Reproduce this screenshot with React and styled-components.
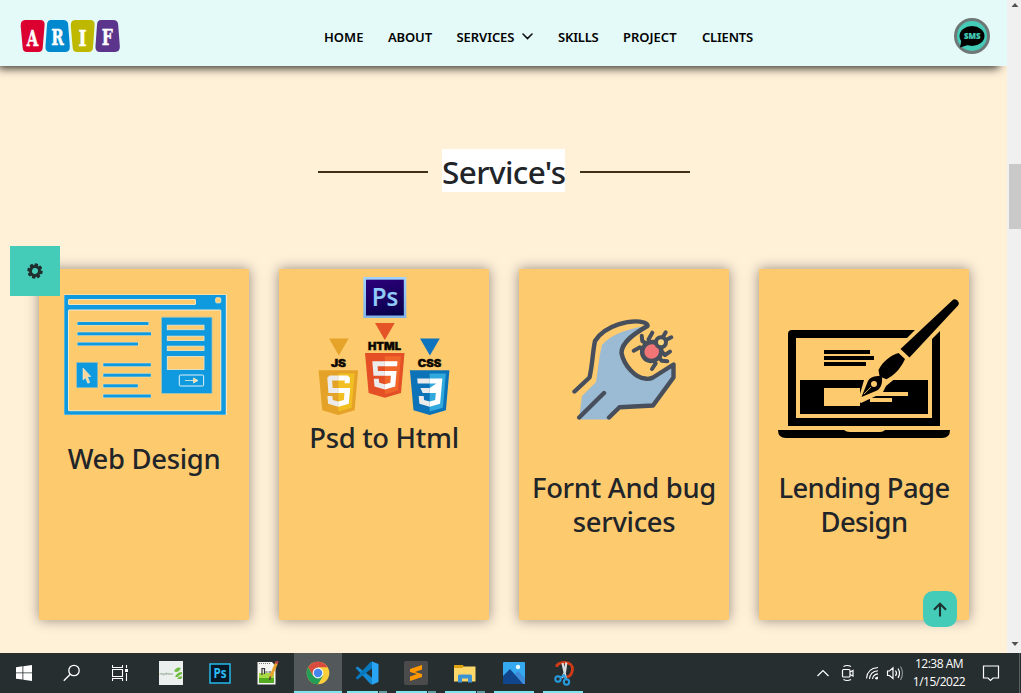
import React from "react";
import styled, { createGlobalStyle } from "styled-components";

const GlobalStyle = createGlobalStyle`
  * { box-sizing: border-box; }
  html, body { margin: 0; padding: 0; overflow: hidden; }
  body { font-family: "Noto Sans", "Open Sans", sans-serif; color: #212529; }
  svg { display: block; flex: none; }
`;

const Screen = styled.div`
  width: 1021px;
  height: 693px;
  display: flex;
  flex-direction: column;
  overflow: hidden;
`;

const Browser = styled.div`
  display: flex;
  height: 653px;
`;

const Page = styled.div`
  position: relative;
  width: 1007px;
  height: 653px;
  background: #fff0d8;
  overflow: hidden;
`;

const Header = styled.header`
  display: flex;
  align-items: center;
  height: 66px;
  padding: 0 17px 0 20px;
  background: #e3faf8;
  position: relative;
  box-shadow: -5px 5px 9px -3px rgba(0, 0, 0, 0.85);
`;

const Nav = styled.nav`
  display: flex;
  align-items: center;
  gap: 24px;
  margin-left: 204px;
  flex: 1;
  padding-top: 7px;
`;

const NavLink = styled.a`
  display: flex;
  align-items: center;
  gap: 8px;
  width: ${(p) => p.$w}px;
  font-size: 13px;
  font-weight: 600;
  line-height: 18px;
  letter-spacing: ${(p) => p.$ls || 0}px;
  color: #000;
  white-space: nowrap;
`;

const SmsButton = styled.button`
  display: flex;
  align-items: center;
  justify-content: center;
  width: 36px;
  height: 36px;
  margin-top: 6px;
  padding: 0;
  border: 3px solid #6f7777;
  border-radius: 50%;
  background: #45ccb8;
`;

const TitleRow = styled.div`
  display: flex;
  align-items: center;
  height: 43px;
  margin-top: 83px;
  padding-left: 318px;
`;

const Rule = styled.span`
  width: 110px;
  height: 2px;
  margin-top: 2px;
  background: #412f1a;
`;

const Title = styled.h2`
  margin: 0 15px 0 14px;
  width: 123px;
  height: 43px;
  background: #fff;
  font-size: 31.5px;
  font-weight: 500;
  line-height: 46px;
  letter-spacing: -0.6px;
  text-align: center;
  white-space: nowrap;
`;

const Cards = styled.section`
  display: flex;
  gap: 30px;
  margin-top: 77px;
  padding-left: 39px;
`;

const Card = styled.article`
  display: flex;
  flex-direction: column;
  align-items: center;
  width: 210px;
  height: 351px;
  padding-top: ${(p) => p.$top}px;
  background: #fdca6e;
  box-shadow: 0 0 12px rgba(0, 0, 0, 0.42);
`;

const CardTitle = styled.h3`
  margin: ${(p) => p.$mt}px 0 0;
  font-size: 27.4px;
  font-weight: 500;
  line-height: 34px;
  letter-spacing: ${(p) => p.$ls || 0}px;
  text-align: center;
  white-space: pre-line;
`;

const SettingsTab = styled.button`
  position: absolute;
  left: 10px;
  top: 246px;
  width: 50px;
  height: 50px;
  display: flex;
  align-items: center;
  justify-content: center;
  padding: 0;
  border: 0;
  background: #45ccb8;
`;

const TopButton = styled.button`
  position: absolute;
  left: 923px;
  top: 591px;
  width: 34px;
  height: 36px;
  display: flex;
  align-items: center;
  justify-content: center;
  padding: 0;
  border: 0;
  border-radius: 10px;
  background: #45ccb8;
`;

const ScrollTrack = styled.div`
  display: flex;
  flex-direction: column;
  align-items: center;
  width: 14px;
  height: 653px;
  padding: 3px 0 7px 2px;
  background: #f0f0f0;
`;

const Thumb = styled.div`
  width: 12px;
  height: 65px;
  margin-top: 157px;
  margin-bottom: auto;
  background: #c9c9c9;
`;

const Taskbar = styled.footer`
  display: flex;
  height: 40px;
  background: #272e30;
`;

const Task = styled.div`
  display: flex;
  align-items: center;
  justify-content: center;
  width: ${(p) => p.$w || 49}px;
  height: 40px;
  background: ${(p) => (p.$active ? "#53595b" : "transparent")};
  position: relative;
`;

const Indicator = styled.span`
  position: absolute;
  bottom: 0;
  left: ${(p) => p.$l}px;
  width: ${(p) => p.$w}px;
  height: 2px;
  background: ${(p) => (p.$dim ? "#62a0a5" : "#7fe4ec")};
`;

const Tray = styled.div`
  display: flex;
  align-items: center;
  margin-left: auto;
  height: 40px;
`;

const Clock = styled.div`
  display: flex;
  flex-direction: column;
  align-items: center;
  width: 62px;
  margin: 0 12px 0 2px;
  color: #fff;
  font-family: "Open Sans", "Noto Sans", sans-serif;
  font-size: 12px;
  line-height: 18px;
  letter-spacing: -0.5px;
  white-space: nowrap;
`;

const DesktopEdge = styled.span`
  width: 1px;
  height: 40px;
  margin: 0 1px 0 19px;
  background: #596062;
`;

const tiles = [
  { d: "M25 20H40Q45 20 44.600 25L42.700 48Q42.300 52 38.500 52H27Q23 52 22.700 48L20.700 26Q20.500 20 25 20Z", c: "#dc0031", t: "A", x: 32.400, y: 45.800, w: 11.500 },
  { d: "M51 20H63Q68 20 68.200 25L69.800 46Q70.200 52 65 52H50Q45 52 45.500 46L47 25Q47.200 20 51 20Z", c: "#0089cf", t: "R", x: 57.400, y: 45.200, w: 12.500 },
  { d: "M75 20H90Q95 20 94.600 25L93 48Q92.500 52 88.500 52H77Q73 52 72.700 48L70.800 26Q70.500 20 75 20Z", c: "#bfb800", t: "I", x: 82.500, y: 45.600, w: 8 },
  { d: "M101 20H113Q118 20 118.200 25L119.800 46Q120.200 52 115 52H100Q95 52 95.500 46L97 25Q97.200 20 101 20Z", c: "#5b358b", t: "F", x: 107.200, y: 45.200, w: 11 },
];

const Logo = () => (
  <svg width="100" height="34" viewBox="20 19 100 34">
    {tiles.map((t) => (
      <g key={t.t}>
        <path d={t.d} fill={t.c} />
        <text x={t.x} y={t.y} fill="#fff" stroke="#fff" strokeWidth="0.5" textAnchor="middle" fontFamily="DejaVu Serif, serif" fontWeight="700" fontSize="21.500" textLength={t.w} lengthAdjust="spacingAndGlyphs">{t.t}</text>
      </g>
    ))}
  </svg>
);

const LogoWrap = styled.div`
  padding-top: 6px;
`;

const SmsIcon = () => (
  <svg width="28" height="24" viewBox="958 24 28 24">
    <ellipse cx="972" cy="36" rx="12.500" ry="10" fill="#000" />
    <path d="M961.500 40L960 47.500L969.500 44.500Z" fill="#000" />
    <text x="972.200" y="39.200" textAnchor="middle" fill="#45ccb8" stroke="#45ccb8" strokeWidth="0.2" fontFamily="Open Sans, sans-serif" fontWeight="800" fontSize="9.500" textLength="16.500" lengthAdjust="spacingAndGlyphs">SMS</text>
  </svg>
);

const bars = [[77.5, 322, 71], [77.5, 332.3, 73.500], [77.5, 342.5, 60.500], [103.300, 363.300, 47.500], [103.300, 373.700, 47.500], [103.300, 384.300, 34.500], [103.300, 394.500, 47.500]];

const WebDesignArt = () => (
  <svg width="163" height="121" viewBox="64 294 163 121">
    <rect x="64" y="294.500" width="162.800" height="120.500" fill="#f6eedb" />
    <rect x="64.300" y="295" width="161.500" height="119.700" fill="#0f99de" />
    <rect x="68.500" y="299.500" width="127" height="5" rx="0.5" fill="#fdca6e" stroke="#e9e5c5" />
    <rect x="215.700" y="297.800" width="5" height="5" rx="1" fill="#fdca6e" stroke="#e9e5c5" />
    <rect x="68.500" y="310" width="152.300" height="100.700" rx="0.5" fill="#fdca6e" stroke="#f2ebd0" />
    {bars.map(([x, y, w], i) => (
      <g key={i}>
        <rect x={x - 0.5} y={y - 0.5} width={w + 0.8} height="4" fill="#dfe3c8" />
        <rect x={x} y={y} width={w} height="3" fill="#0f99de" />
      </g>
    ))}
    <rect x="161.500" y="317.200" width="50.500" height="76.300" rx="1" fill="#0f99de" stroke="#a4c4b5" strokeWidth="0.8" />
    {[[325.200, 4.500], [336.200, 4.300], [346.200, 4.300], [356.500, 13]].map(([y, h]) => (
      <rect key={y} x="167.300" y={y} width="36.700" height={h} fill="#fdca6e" stroke="#e8e3c4" strokeWidth="0.9" />
    ))}
    <rect x="179.300" y="375" width="24.300" height="11" rx="1" fill="#0f99de" stroke="#e0f2f5" />
    <path d="M185 380.500H197M193.500 378V383L198 380.500Z" stroke="#f4eed4" strokeWidth="0.8" fill="#fdca6e" />
    <rect x="76.700" y="362.500" width="21" height="25.200" fill="#0f99de" stroke="#8fc0c2" strokeWidth="0.6" />
    <path d="M83 368L90.800 376.500H87.500L89.700 382.500L87.800 383.300L85.500 377.800L83 380Z" fill="#fbd697" stroke="#f5efdc" strokeWidth="0.6" />
  </svg>
);

const Shield = ({ x, y, dark, light, children }) => (
  <g transform={`translate(${x} ${y})`}>
    <path d="M0 0H39.500L36 40L19.800 44.800L3.600 40Z" fill={dark} />
    <path d="M19.800 3.200H36L33 37.600L19.800 41.300Z" fill={light} />
    {children}
  </g>
);

const badgeLabels = [
  { t: "HTML", x: 384.500, y: 350, w: 33, s: 10.500 },
  { t: "JS", x: 338.500, y: 367, w: 15, s: 10 },
  { t: "CSS", x: 429.500, y: 367, w: 23.500, s: 10 },
];

const PsdArt = () => (
  <svg width="132" height="138" viewBox="318 277 132 138">
    <defs>
      <linearGradient id="psd-frame" x1="0" y1="0" x2="0" y2="1"><stop offset="0" stopColor="#a2d2fa" /><stop offset="1" stopColor="#80b4e8" /></linearGradient>
      <linearGradient id="psd-fill" x1="0.300" y1="0" x2="0.600" y2="1"><stop offset="0" stopColor="#2b0078" /><stop offset="1" stopColor="#09004c" /></linearGradient>
    </defs>
    <rect x="363.300" y="277" width="43" height="41" fill="url(#psd-frame)" />
    <rect x="366" y="279.700" width="37.800" height="35.800" fill="url(#psd-fill)" />
    <text x="385" y="305.800" textAnchor="middle" fill="#91cbf8" stroke="#91cbf8" strokeWidth="0.2" fontFamily="Open Sans, sans-serif" fontWeight="600" fontSize="26" textLength="26.500" lengthAdjust="spacingAndGlyphs">Ps</text>
    <path d="M375 323H394.700L384.800 340Z" fill="#e55426" />
    <path d="M329 338.500H348.700L338.800 355.500Z" fill="#e5a429" />
    <path d="M420 338.500H439.800L429.900 355.500Z" fill="#0f74bd" />
    {badgeLabels.map((b) => (
      <text key={b.t} x={b.x} y={b.y} textAnchor="middle" fill="#0a0800" stroke="#0a0800" strokeWidth="0.4" fontFamily="Inter, sans-serif" fontWeight="900" fontSize={b.s} textLength={b.w} lengthAdjust="spacingAndGlyphs">{b.t}</text>
    ))}
    <Shield x={365} y={353} dark="#e44f26" light="#f1662a">
      <path d="M19.800 8.200H7.300L8.500 22.800H19.800V17.900H13L12.600 13.200H19.800ZM19.800 31.300L14.200 29.800L13.800 25.800H8.800L9.500 33.600L19.800 36.500Z" fill="#ebebeb" />
      <path d="M19.800 8.200H32.500L32.100 13.200H19.800ZM19.800 17.900H31.600L30.200 33.600L19.800 36.500V31.300L25.300 29.800L25.900 22.800H19.800Z" fill="#fff" />
    </Shield>
    <Shield x={318.600} y={370.200} dark="#e5a228" light="#f1bf22">
      <path d="M19.800 5.200H11L8.700 7.500L9.800 22.800H19.800V17.900H14L13.500 10.200H19.800ZM19.800 31.300L14.200 29.800L13.800 25.800H8.800L9.500 33.600L19.800 36.500Z" fill="#ebebeb" />
      <path d="M19.800 5.200H29L31.400 7.500L31 13H26L26.200 10.200H19.800ZM19.800 17.900H31.600L30.200 33.600L19.800 36.500V31.300L25.300 29.800L25.900 22.800H19.800Z" fill="#fff" />
    </Shield>
    <Shield x={409.900} y={370.200} dark="#0c73b8" light="#31a9dc">
      <path d="M19.800 8.200H7.300L7.800 13.200H19.800ZM19.800 17.900H10.500L12.800 22.800H19.800ZM19.800 31.300L14.200 29.800L13.800 25.800H8.800L9.500 33.600L19.800 36.500Z" fill="#ebebeb" />
      <path d="M19.800 8.200H32.500L30.200 33.600L19.800 36.500V31.300L25.300 29.800L25.900 22.800H19.800V17.900L26.400 13.200H19.800Z" fill="#fff" />
    </Shield>
  </svg>
);

const BugArt = () => (
  <svg width="105" height="102" viewBox="572 319 105 102">
    <path d="M643 326.500C629 329 611 334 602 345C599 357 598 369 596 382L582 396L579 419.500H609L619.500 407L653 406L675 377V363L650 378C637 380 624 366 621 354C621 341 634 332 643 326.500Z" fill="#9abbd3" />
    <g fill="none" stroke="#464f5b" strokeWidth="4.400" strokeLinecap="round" strokeLinejoin="round">
      <path d="M574.500 391.500L589.500 377.500C592.500 365 592.500 353 595 341C605 325 631 319 644 322.500Q648 324 647.500 326C635 333 621.500 342 621.500 353C624 366 636 378 645 378.500Q649 379.500 653 377.500L673.500 364.500V377.500L653 405.500L619.500 407.200L609 417.500M579.200 417.500L604 393" />
      <path d="M633.700 350.700L640 347.300L644 350M641.700 335.700L642.300 341L647 344M652.300 332.700L648.500 339.500L650 343M665.700 332.300L663 337M671.300 337.300L666 340M670 351.700L665 355L661 351M667.300 361.300L661.700 360.700L658 356M652 369L655.700 363.300L653.500 360" strokeWidth="4" />
      <ellipse cx="651.700" cy="351.500" rx="9.700" ry="9.300" fill="#f17577" transform="rotate(-40 651.700 351.500)" />
      <circle cx="661" cy="342.300" r="5" fill="#fbd77d" strokeWidth="4" />
    </g>
  </svg>
);

const PenArt = () => (
  <svg width="182" height="140" viewBox="778 299 182 140">
    <path d="M792 330H915L907 338H796V418H932V339L940 331V426H788V334Q788 330 792 330Z" fill="#000" />
    <path d="M824 350H870V354H824ZM824 356H874V360H824ZM824 362H866V366H824Z" fill="#000" />
    <path d="M800 380H928V414H800Z" fill="#000" />
    <path d="M824 388H860V406H824ZM880 392H908V396H872ZM870 398H892V402H870Z" fill="#fdca6e" />
    <path d="M864 380L858 401L861 403L876 396L882 394L886 386L897 377L891 373L875 372Z" fill="#fdca6e" />
    <path d="M778 430H844Q846 432 850 432H880Q883 432 885 430H950Q950 438 942 438H786Q778 438 778 430Z" fill="#000" />
    <path d="M953 299.700Q955 298.500 957 300.300L958.500 302Q959.300 304 958 305.500L909.500 357.500L900.500 349Z" fill="#000" />
    <path d="M898.500 353L905 359C900 370 893 376 886.500 379.200L882 377.500C882.500 382 881.500 388 877 390.500L861.500 397L868 381C870 377 875 376 879.500 376L878.500 370C883 361 891 355 898.500 353Z" fill="#000" />
    <circle cx="874" cy="384" r="3" fill="#fdca6e" />
    <path d="M864 394L871 387" stroke="#fdca6e" strokeWidth="0.8" />
  </svg>
);

const GearIcon = () => (
  <svg width="16" height="16" viewBox="-8 -8 16 16">
    <g transform="rotate(12)" fill="#20302f">
      {[0, 45, 90, 135, 180, 225, 270, 315].map((a) => (
        <rect key={a} x="-1.800" y="-7.700" width="3.600" height="4" rx="0.9" transform={`rotate(${a})`} />
      ))}
      <circle r="4.500" fill="none" stroke="#20302f" strokeWidth="3" />
    </g>
  </svg>
);

const ChromeIcon = () => (
  <svg width="24" height="24" viewBox="-12 -12 24 24">
    <circle r="11.300" fill="#fbcf3c" />
    <path d="M-9.800 -5.650A11.300 11.300 0 0 1 9.800 -5.650H0L-5 3Z" fill="#d94b3e" />
    <path d="M-9.800 -5.650A11.300 11.300 0 0 0 0 11.300L5 2.800L-5 2.800Z" fill="#249d57" />
    <circle r="5.400" fill="#f3f6f5" />
    <circle r="4.200" fill="#4585ec" />
  </svg>
);

const CodeIcon = () => (
  <svg width="24" height="24" viewBox="0.500 0 24 24">
    <path d="M1 7L3 5.500L18 17V23.500L16 23Z" fill="#1488d0" />
    <path d="M1 17L3 18.500L18 7V0.500L16 1Z" fill="#0878be" />
    <path d="M17.500 0.500L24 3V21L17.500 23.700Z" fill="#28a4f2" />
  </svg>
);

const SublimeIcon = () => (
  <svg width="24" height="24" viewBox="0 0 24 24">
    <rect width="24" height="24" rx="2" fill="#4b4b4b" />
    <path d="M6 8L18 4V8.500L11 11L18 13V16L6 20V15.500L13 13L6 11Z" fill="#ff9800" />
  </svg>
);

const FolderIcon = () => (
  <svg width="22" height="19" viewBox="0 0 22 19">
    <path d="M0 1H9L10 3H21V9H0Z" fill="#dfa10e" />
    <path d="M0 4H8L10 2.500H21.500V17.500H0Z" fill="#ffd86b" />
    <path d="M4 18.500V12Q4 10.500 5.500 10.500H16.500Q18 10.500 18 12V18.500H14V14.500H8V18.500Z" fill="#3c94d5" />
  </svg>
);

const PhotosIcon = () => (
  <svg width="22" height="22" viewBox="0 0 22 22">
    <rect width="22" height="22" rx="1" fill="#35a9ef" />
    <path d="M10 14L15 9L22 16V22H10Z" fill="#3d8bd9" />
    <path d="M0 14L7 7L20 22H0Z" fill="#12468c" />
    <circle cx="15" cy="5" r="2.200" fill="#e8fbff" />
  </svg>
);

const SnipIcon = () => (
  <svg width="22" height="25" viewBox="-1 0 22 25">
    <path d="M3 5Q4 1.500 11 1.500Q19 2 18.500 9Q17.500 15 13 16M3 3V6" fill="none" stroke="#d13a16" strokeWidth="2.800" />
    <path d="M8.500 2L10.500 11L12 18M12.300 1.500L11 11L8 17" stroke="#dadddf" strokeWidth="2.200" fill="none" />
    <g fill="none" stroke="#279be0" strokeWidth="2"><circle cx="4" cy="18" r="2.700" /><circle cx="12.500" cy="21" r="2.700" /><path d="M6 17L10 14L12 18" /></g>
  </svg>
);

const NotepadIcon = () => (
  <svg width="22" height="25" viewBox="0 0 22 25">
    <path d="M0.500 1H15L18.500 5V23.500H0.500Z" fill="#f5f6f2" />
    <path d="M2 12H17V22H2Z" fill="#a8da45" />
    <path d="M2 17H17V22H2Z" fill="#54ad20" />
    <path d="M5 14V7.500H7.500V13M8.500 11H10.500M11.500 11H14" stroke="#333" strokeWidth="1.200" fill="none" />
    <path d="M2 2.500H14" stroke="#777" strokeDasharray="1 1" />
    <path d="M19.500 2L13.500 16" stroke="#e8a42e" strokeWidth="3" /><path d="M20.300 0L19.200 2.600" stroke="#b94245" strokeWidth="3" /><path d="M13.500 15.500L12.500 19" stroke="#554434" strokeWidth="1.500" />
  </svg>
);

const PhotoshopIcon = () => (
  <svg width="22" height="21" viewBox="0 0 22 21">
    <rect x="1" y="1" width="20" height="19" fill="#081725" stroke="#25b9ea" strokeWidth="1.500" />
    <text x="11" y="15.300" textAnchor="middle" fill="#2cbcf2" fontFamily="Open Sans, sans-serif" fontWeight="700" fontSize="13.500" textLength="13" lengthAdjust="spacingAndGlyphs">Ps</text>
  </svg>
);

const LeafIcon = () => (
  <svg width="24" height="24" viewBox="0 0 24 24">
    <rect width="24" height="24" fill="#ebefee" />
    <path d="M15 10Q18 5 22 7L20 10Q17 12 15 10ZM16 16Q18 11 23 11V13Q20 14 19 16ZM18 18Q21 14 23.500 16L22 18Z" fill="#70bd42" />
    <text x="0.500" y="13.500" fontSize="3.800" textLength="13.500" fill="#6f8f6c">mydress</text>
  </svg>
);

const SearchIcon = () => (
  <svg width="18" height="18" viewBox="0 0 18 18" fill="none" stroke="#fff" strokeWidth="1.300"><circle cx="11" cy="6.500" r="5.200" /><path d="M7.300 10.300L0.800 16.800" /></svg>
);

const WindowsIcon = () => (
  <svg width="16" height="16" viewBox="0 0 16 16" fill="#fff"><path d="M0 2.200L6.500 1.300V7.500H0ZM7.300 1.200L16 0V7.500H7.300ZM0 8.300H6.500V14.600L0 13.700ZM7.300 8.300H16V16L7.300 14.800Z" /></svg>
);

const TaskViewIcon = () => (
  <svg width="16" height="16" viewBox="0 0 16 16" fill="none" stroke="#fff" strokeWidth="1.100"><path d="M0.500 0V2.500H10.500V0M0.500 16V13.500H10.500V16M0.500 4.500H10.500V11.500H0.500ZM14.500 0V3M14.500 8V16" /><path d="M13 4H16V7H13Z" fill="#fff" stroke="none" /></svg>
);

const TrayIcons = () => (
  <svg width="90" height="20" viewBox="816 663 90 20" fill="none" stroke="#fff" strokeWidth="1.200">
    <path d="M817.500 676L823 670.500L828.500 676" />
    <rect x="842.500" y="669.500" width="7.500" height="7.500" rx="1" />
    <path d="M850 672L853 670.500V676L850 674.500M843.500 666.500Q847 664.500 851 666.500M843.500 679.500Q847 681.500 851 679.500" />
    <path d="M866.500 678.500Q867 668.500 878 667.500M869.500 679Q870 671.500 878 670.700M872.500 679Q873 674.500 878 673.900M875.500 679Q875.700 677.300 878 677" strokeWidth="1.100" />
    <circle cx="876.700" cy="678.200" r="1.200" fill="#fff" stroke="none" />
    <path d="M887.500 671H889.500L893 667.800V678.500L889.500 675.500H887.500ZM895.500 670.500Q897.500 673 895.500 676M898 668.500Q901 673 898 678" />
    <path d="M900.500 666.500Q904.500 673 900.500 680" stroke="#899193" />
  </svg>
);

const NoticeIcon = () => (
  <svg width="18" height="17" viewBox="0 0 18 17" fill="none" stroke="#fff" strokeWidth="1.200"><path d="M1.500 1H16.500V13H11L8.500 15.500L6 13H1.500Z" /></svg>
);

const navItems = [
  { label: "HOME", w: 40 },
  { label: "ABOUT", w: 44.500, ls: -0.15 },
  { label: "SERVICES", w: 77.500, ls: -0.08, menu: true },
  { label: "SKILLS", w: 41, ls: -0.2 },
  { label: "PROJECT", w: 55 },
  { label: "CLIENTS", w: 53, ls: -0.2 },
];

const services = [
  { title: "Web Design", Art: WebDesignArt, top: 25, mt: 27, shift: 2, ls: -0.3 },
  { title: "Psd to Html", Art: PsdArt, top: 8, mt: 6, shift: 0, ls: -0.3 },
  { title: "Fornt And bug\nservices", Art: BugArt, top: 50, mt: 50, shift: 0, ls: -0.3 },
  { title: "Lending Page\nDesign", Art: PenArt, top: 30, mt: 32, shift: 9, ls: -0.6 },
];

const tasks = [
  { Icon: WindowsIcon, w: 48 },
  { Icon: SearchIcon, w: 48 },
  { Icon: TaskViewIcon, w: 48 },
  { Icon: LeafIcon, w: 54 },
  { Icon: PhotoshopIcon, w: 43 },
  { Icon: NotepadIcon, w: 53 },
  { Icon: ChromeIcon, w: 48, active: true, line: [0, 48] },
  { Icon: CodeIcon, w: 50, line: [5, 31], extra: [37, 8] },
  { Icon: SublimeIcon, w: 48, line: [4, 31], extra: [36, 8] },
  { Icon: FolderIcon, w: 49, line: [5, 31], extra: [37, 8] },
  { Icon: PhotosIcon, w: 49, line: [5, 40] },
  { Icon: SnipIcon, w: 51, line: [5, 40] },
];

const ArtBox = styled.div`
  margin-left: ${(p) => p.$shift || 0}px;
`;

export default function App() {
  return (
    <Screen>
      <GlobalStyle />
      <Browser>
        <Page>
          <Header>
            <LogoWrap><Logo /></LogoWrap>
            <Nav>
              {navItems.map((n) => (
                <NavLink key={n.label} $w={n.w} $ls={n.ls}>
                  {n.label}
                  {n.menu && (
                    <svg width="11" height="7" viewBox="0 0 11 7" fill="none" stroke="#111" strokeWidth="1.600" strokeLinecap="round"><path d="M1 1L5.500 5.500L10 1" /></svg>
                  )}
                </NavLink>
              ))}
            </Nav>
            <SmsButton><SmsIcon /></SmsButton>
          </Header>
          <TitleRow><Rule /><Title>Service's</Title><Rule /></TitleRow>
          <Cards>
            {services.map(({ title, Art, top, mt, shift, ls }) => (
              <Card key={title} $top={top}>
                <ArtBox $shift={shift}><Art /></ArtBox>
                <CardTitle $mt={mt} $ls={ls}>{title}</CardTitle>
              </Card>
            ))}
          </Cards>
          <SettingsTab><GearIcon /></SettingsTab>
          <TopButton>
            <svg width="14" height="15" viewBox="0 0 14 15" fill="none" stroke="#1d302e" strokeWidth="2.100"><path d="M7 14.500V2M1 7.700L7 1.700L13 7.700" /></svg>
          </TopButton>
        </Page>
        <ScrollTrack>
          <svg width="8" height="4" viewBox="0 0 8 4"><path d="M0.500 4L4 0L7.500 4Z" fill="#505050" /></svg>
          <Thumb />
          <svg width="8" height="4" viewBox="0 0 8 4"><path d="M0.500 0L4 4L7.500 0Z" fill="#505050" /></svg>
        </ScrollTrack>
      </Browser>
      <Taskbar>
        {tasks.map(({ Icon, w, active, line, extra }, i) => (
          <Task key={i} $w={w} $active={active}>
            <Icon />
            {line && <Indicator $l={line[0]} $w={line[1]} />}
            {extra && <Indicator $dim $l={extra[0]} $w={extra[1]} />}
          </Task>
        ))}
        <Tray>
          <TrayIcons />
          <Clock><span>12:38 AM</span><span>1/15/2022</span></Clock>
          <NoticeIcon />
          <DesktopEdge />
        </Tray>
      </Taskbar>
    </Screen>
  );
}
